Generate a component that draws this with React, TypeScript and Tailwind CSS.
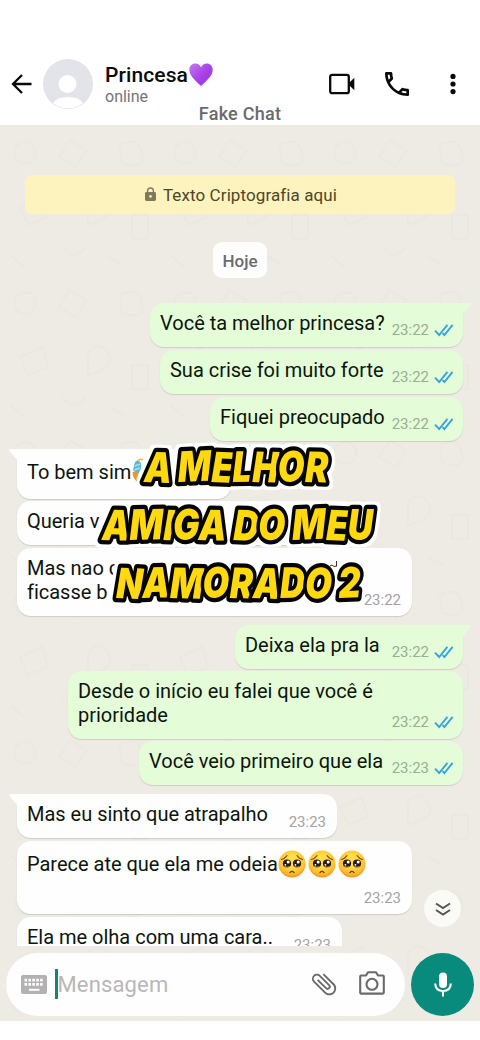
import type { ReactNode } from 'react';
import clsx from 'clsx';
import { MdAttachFile } from 'react-icons/md';

type Message = {
  id: number;
  side: 'in' | 'out';
  text: ReactNode;
  time?: string;
  size: string;
  tail?: boolean;
  tall?: boolean;
};

function PleadingFace() {
  return (
    <svg viewBox="0 0 28 28" className="inline-block w-[28px] h-[28px] mr-[2px] -my-2 align-[1px]">
      <defs>
        <radialGradient id="face" cx="50%" cy="38%" r="62%">
          <stop offset="0.35" stopColor="#ffdf45" />
          <stop offset="0.8" stopColor="#fdba2c" />
          <stop offset="1" stopColor="#ef8e1c" />
        </radialGradient>
      </defs>
      <circle cx="14" cy="14" r="13.5" fill="url(#face)" />
      <path d="M3.5 9.5Q7 8.5 9 5.6M24.5 9.5Q21 8.5 19 5.6" stroke="#8a4b12" strokeWidth="1.1" fill="none" strokeLinecap="round" />
      <circle cx="9" cy="13.6" r="4.1" fill="#2c1a12" />
      <circle cx="19" cy="13.6" r="4.1" fill="#2c1a12" />
      <circle cx="10.2" cy="12" r="1.5" fill="#fff" />
      <circle cx="20.2" cy="12" r="1.5" fill="#fff" />
      <circle cx="7.4" cy="14.8" r="0.9" fill="#fff" />
      <circle cx="17.4" cy="14.8" r="0.9" fill="#fff" />
      <path d="M6.5 16.6q2.5 1.4 5 0M16.5 16.6q2.5 1.4 5 0" stroke="#e9c9a0" strokeWidth="0.8" fill="none" />
      <path d="M12 22.6q2-2.4 4 0" stroke="#7a3d10" strokeWidth="1.4" fill="none" strokeLinecap="round" />
    </svg>
  );
}

function PartyFace() {
  return (
    <svg viewBox="0 0 28 28" className="inline-block w-[28px] h-[28px] -my-2 ml-[1px] align-[1px]">
      <path d="M1 12L3 4L6 2L9 5L9 13L6 17Z" fill="#58b6da" />
      <path d="M3 8L8 6M2.5 12L8 10" stroke="#a5e2ee" strokeWidth="1.5" />
      <path d="M0.5 14Q5 13 8 17L6 25Q0.5 20 0.5 14" fill="#ef952a" />
      <path d="M6 3Q8 0 11 2" stroke="#eeb63b" strokeWidth="1.4" fill="none" />
    </svg>
  );
}

const messages: Message[] = [
  { id: 1, side: 'out', text: 'Você ta melhor princesa?', time: '23:22', size: 'w-[313px] h-[44px]', tail: true },
  { id: 2, side: 'out', text: 'Sua crise foi muito forte', time: '23:22', size: 'w-[303px] h-[44px]' },
  { id: 3, side: 'out', text: 'Fiquei preocupado', time: '23:22', size: 'w-[253px] h-[44px]' },
  { id: 4, side: 'in', text: <>To bem sim<PartyFace /></>, size: 'w-[214px] h-[50px] mt-[5px]', tail: true, tall: true },
  { id: 5, side: 'in', text: 'Queria v', size: 'w-[340px] h-[44px] -mt-[1px]' },
  { id: 6, side: 'in', text: <>Mas nao q<br />ficasse b</>, time: '23:22', size: 'w-[395px] h-[68px]' },
  { id: 7, side: 'out', text: 'Deixa ela pra la', time: '23:22', size: 'w-[228px] h-[44px] mt-[6px]', tail: true },
  { id: 8, side: 'out', text: <>Desde o início eu falei que você é<br />prioridade</>, time: '23:22', size: 'w-[395px] h-[68px] -mt-[1px]' },
  { id: 9, side: 'out', text: 'Você veio primeiro que ela', time: '23:23', size: 'w-[324px] h-[44px] -mt-[1px]' },
  { id: 10, side: 'in', text: 'Mas eu sinto que atrapalho', time: '23:23', size: 'w-[320px] h-[44px] mt-[6px]', tail: true },
  {
    id: 11,
    side: 'in',
    text: <>Parece ate que ela me odeia<PleadingFace /><PleadingFace /><PleadingFace /></>,
    time: '23:23',
    size: 'w-[395px] h-[73px]',
    tall: true,
  },
  { id: 12, side: 'in', text: 'Ela me olha com uma cara..', time: '23:23', size: 'w-[325px] h-[44px]' },
];

function DoubleCheck() {
  return (
    <svg viewBox="0 0 20 14" className="w-[20px] h-[14px] -mt-[2px]" fill="none" stroke="#36a5dc" strokeWidth="1.9">
      <path d="M1 7.6L5.2 12L13.4 1.8" />
      <path d="M8.6 10.2L10.4 12L18.6 1.8" />
    </svg>
  );
}

function Bubble({ side, text, time, size, tail, tall }: Message) {
  const out = side === 'out';
  return (
    <div
      className={clsx(
        'relative shrink-0 flex justify-between rounded-[14px] pl-[10px] shadow-[0_1px_1px_rgba(0,0,0,0.13)]',
        out ? 'self-end bg-[#e4fdd8] pr-[8px]' : 'self-start bg-[#fefefe] pr-[11px]',
        tail && (out ? 'rounded-tr-none' : 'rounded-tl-none'),
        size,
      )}
    >
      {tail && (
        <svg
          viewBox="0 0 9 12"
          className={clsx('absolute top-0 w-[9px] h-[12px]', out ? '-right-[8px]' : '-left-[8px] -scale-x-100')}
          fill={out ? '#e4fdd8' : '#fefefe'}
        >
          <path d="M0 0H7.4Q9.4 0.6 8 2.4L1 11V12H0Z" />
        </svg>
      )}
      <p
        className={clsx(
          'whitespace-nowrap text-[20px] leading-[24px] tracking-[-0.01px] text-[#0d140d]',
          tall ? 'pt-[11px]' : 'pt-[8px]',
        )}
      >
        {text}
      </p>
      {time && (
        <span className={clsx('absolute flex items-center gap-[5px]', out ? 'bottom-[8px] right-[9px]' : 'bottom-[7px] right-[11px]')}>
          <span className={clsx('text-[15px] leading-[17px]', out ? 'text-[#9aae92]' : 'text-[#a3a3a3]')}>{time}</span>
          {out && <DoubleCheck />}
        </span>
      )}
    </div>
  );
}

function Header() {
  return (
    <header className="relative shrink-0 flex items-start h-[125px] bg-white pt-[59px]">
      <svg viewBox="0 0 22 20" className="w-[22px] h-[20px] ml-[11px] mt-[15px]" fill="none" stroke="#0a0a0a" strokeWidth="2.3">
        <path d="M20.5 10H2M11 1L2 10L11 19" />
      </svg>
      <svg viewBox="0 0 50 50" className="w-[50px] h-[50px] ml-[10px]">
        <circle cx="25" cy="25" r="25" fill="#e3e4e9" />
        <circle cx="24.5" cy="25" r="9" fill="#fff" />
        <path d="M10 44Q14 38 25 38T40 44Q34 49 25 49T10 44Z" fill="#fff" />
      </svg>
      <div className="flex-1 ml-[12px] mt-[3px]">
        <div className="flex items-center h-[26px]">
          <h1 className="text-[21px] font-medium tracking-[0.1px] leading-[26px] text-[#0c0c0c]">Princesa</h1>
          <svg viewBox="0 0 24 23" className="w-[24px] h-[23px] ml-[1px] -mt-[2px]">
            <defs>
              <linearGradient id="heart" x1="0" y1="0" x2="1" y2="1">
                <stop offset="0" stopColor="#c57bf0" />
                <stop offset="0.5" stopColor="#a943ea" />
                <stop offset="1" stopColor="#9233d8" />
              </linearGradient>
            </defs>
            <path d="M12 23C8 19 0.3 13.5 0.3 6.8C0.3 3 3 0.5 6.2 0.5C9 0.5 11 2 12 4.5C13 2 15 0.5 17.8 0.5C21 0.5 23.7 3 23.7 6.8C23.7 13.5 16 19 12 23Z" fill="url(#heart)" />
          </svg>
        </div>
        <p className="text-[16px] leading-[18px] text-[#737478]">online</p>
      </div>
      <div className="flex items-center h-[50px]">
        <svg viewBox="0 0 26 22" className="w-[26px] h-[22px] mr-[30px]">
          <rect x="1.2" y="1.8" width="18.6" height="18.4" rx="2" fill="none" stroke="#0a0a0a" strokeWidth="2.3" />
          <path d="M19 11L25.3 4.8V17.2Z" fill="#0a0a0a" />
        </svg>
        <svg viewBox="3 3 18 18" className="w-[24px] h-[24px] mr-[41px]" fill="#0a0a0a">
          <path d="M6.54 5c.06.89.21 1.76.45 2.59l-1.2 1.2c-.41-1.2-.67-2.47-.76-3.79h1.51m9.86 12.02c.85.24 1.72.39 2.6.45v1.49c-1.32-.09-2.59-.35-3.8-.75l1.2-1.19M7.5 3H4c-.55 0-1 .45-1 1 0 9.39 7.61 17 17 17 .55 0 1-.45 1-1v-3.49c0-.55-.45-1-1-1-1.24 0-2.45-.2-3.57-.57a.84.84 0 00-.31-.05c-.26 0-.51.1-.71.29l-2.2 2.2a15.149 15.149 0 01-6.59-6.59l2.2-2.2c.28-.28.36-.67.25-1.02A11.36 11.36 0 018.5 4c0-.55-.45-1-1-1z" />
        </svg>
        <svg viewBox="0 0 6 22" className="w-[6px] h-[22px] mr-[24px]" fill="#0a0a0a">
          <circle cx="3" cy="3.4" r="2.6" />
          <circle cx="3" cy="11" r="2.6" />
          <circle cx="3" cy="18.6" r="2.6" />
        </svg>
      </div>
      <p className="absolute inset-x-0 top-[103px] text-center text-[18px] font-medium leading-[22px] tracking-[0.25px] text-[#696a6c]">Fake Chat</p>
    </header>
  );
}

// Faint doodle wallpaper behind the conversation
function Wallpaper() {
  return (
    <svg className="absolute inset-0 w-full h-full" fill="none" stroke="#e6e2da" strokeWidth="2">
      <defs>
        <pattern id="doodles" width="160" height="150" patternUnits="userSpaceOnUse">
          <circle cx="25" cy="28" r="11" />
          <path d="M70 15l16 10-10 17-17-10zM120 20q18-10 22 8t-20 10zM20 82l22-10 6 20-20 8zM88 78q10-14 20 0t-20 22zM132 90v24h16V90zM62 122q12 16 24 0M10 130l14 12M108 132l16 8" />
        </pattern>
      </defs>
      <rect width="100%" height="100%" fill="url(#doodles)" stroke="none" opacity="0.35" />
    </svg>
  );
}

const captionLines = [
  { text: 'A MELHOR', x: 45, y: 44, length: 184, rotate: '2 0 -2 2 -1 1 -2 1' },
  { text: 'AMIGA DO MEU', x: 3, y: 102, length: 271, rotate: '1 -1 2 -2 1 0 2 -1 0 -2 2 0' },
  { text: 'NAMORADO 2', x: 17, y: 160, length: 245, rotate: '2 -1 1 -2 1 2 -1 1 0 -2' },
];

function Caption() {
  return (
    <svg
      viewBox="0 0 280 180"
      className="absolute left-[99px] top-[438px] w-[280px] h-[180px] overflow-visible font-['Inter'] text-[42px] font-black italic [filter:drop-shadow(3px_0_0_white)_drop-shadow(-3px_0_0_white)_drop-shadow(0_3px_0_white)_drop-shadow(0_-3px_0_white)]"
      fill="#fed90f"
      stroke="#050505"
      strokeWidth="8.5"
      strokeLinejoin="round"
      paintOrder="stroke"
    >
      {captionLines.map(({ text, x, y, length, rotate }) => (
        <text key={text} x={x} y={y} textLength={length} lengthAdjust="spacingAndGlyphs" rotate={rotate}>
          {text}
        </text>
      ))}
    </svg>
  );
}

function Composer() {
  return (
    <footer className="relative shrink-0 flex items-center h-[75px] pl-[6px] pr-[6px] pt-[1px]">
      <div className="flex items-center w-[399px] h-[63px] rounded-full bg-[#fefefe] pl-[15px] pr-[20px]">
        <svg viewBox="0 0 26 19" className="w-[26px] h-[19px]">
          <rect width="26" height="19" rx="2" fill="#b3b1b1" />
          <path d="M3.5 5.2h19M3.5 9.4h19" stroke="#fff" strokeWidth="2.7" strokeDasharray="2.6 1.3" />
          <path d="M8 14.8h10.5" stroke="#fff" strokeWidth="2" />
        </svg>
        <span className="w-[2.5px] h-[30px] ml-[8px] bg-[#16876f]" />
        <span className="flex-1 pt-[2px] text-[22px] leading-[28px] tracking-[0.15px] text-[#b9b7b7]">Mensagem</span>
        <MdAttachFile className="w-[30px] h-[30px] mr-[20px] -rotate-45 text-[#6b6969]" />
        <svg viewBox="0 0 26 24" className="w-[26px] h-[24px] -mt-[2px]" fill="none" stroke="#6b6969" strokeWidth="2.1" strokeLinejoin="round">
          <path d="M2.2 4.5H7L9 1.3H17L19 4.5H23.8Q24.8 4.5 24.8 5.5V21.5Q24.8 22.6 23.8 22.6H2.2Q1.2 22.6 1.2 21.5V5.5Q1.2 4.5 2.2 4.5Z" />
          <circle cx="13" cy="13.3" r="5.5" />
        </svg>
      </div>
      <button className="flex items-center justify-center w-[63px] h-[63px] ml-[6px] rounded-full bg-[#088b7c]">
        <svg viewBox="0 0 18 25" className="w-[18px] h-[25px]">
          <rect x="5" y="0.5" width="8" height="15.5" rx="4" fill="#fff" />
          <path d="M1.2 11.5Q1.4 19 9 19T16.8 11.5M9 19V24.5" fill="none" stroke="#fff" strokeWidth="2.1" />
        </svg>
      </button>
    </footer>
  );
}

export default function App() {
  return (
    <div className="relative flex flex-col w-[480px] h-[1040px] overflow-hidden bg-white font-['Roboto','Liberation_Sans',sans-serif]">
      <Header />
      <main className="relative flex flex-col h-[896px] bg-[#eeebe4]">
        <Wallpaper />
        <div className="relative flex flex-col h-[821px] overflow-hidden pt-[50px] pl-[17px] pr-[17px]">
          <div className="shrink-0 flex items-center justify-center gap-[7px] h-[39px] mx-[8px] pl-[2px] pt-[2px] rounded-[7px] bg-[#fdf3bf] text-[17px] tracking-[0.1px] text-[#4d4729]">
            <svg viewBox="0 0 11 14" className="w-[11px] h-[14px] -mt-[3px]">
              <path d="M2.6 6V3.8Q2.6 1 5.5 1T8.4 3.8V6" fill="none" stroke="#80795b" strokeWidth="1.4" />
              <rect y="5" width="11" height="9" rx="1.4" fill="#80795b" />
              <circle cx="5.5" cy="9.4" r="1.3" fill="#fdf2c0" />
            </svg>
            Texto Criptografia aqui
          </div>
          <div className="shrink-0 self-center flex items-center justify-center w-[54px] h-[36px] mt-[28px] mb-[25px] pt-[3px] rounded-[9px] bg-[#fefdfd] text-[17px] font-medium text-[#6c6b6b]">
            Hoje
          </div>
          <div className="flex flex-col gap-[3px]">
            {messages.map((message) => (
              <Bubble key={message.id} {...message} />
            ))}
          </div>
        </div>
        <Composer />
        <button className="absolute left-[424px] top-[765px] flex items-center justify-center w-[37px] h-[37px] rounded-full bg-[#fafaf7]">
          <svg viewBox="0 0 16 14" className="w-[16px] h-[14px]" fill="none" stroke="#555" strokeWidth="2">
            <path d="M1 1.5L8 6L15 1.5M1 8L8 12.5L15 8" />
          </svg>
        </button>
      </main>
      <Caption />
      {/* Stroke of the covered message that peeks out between the caption letters */}
      <svg viewBox="0 0 8 7" className="absolute left-[330px] top-[561px] w-[8px] h-[7px]" fill="none" stroke="#333" strokeWidth="1">
        <path d="M0 5L2 4L4 5.5L7 5M6.5 0V5" />
      </svg>
    </div>
  );
}
